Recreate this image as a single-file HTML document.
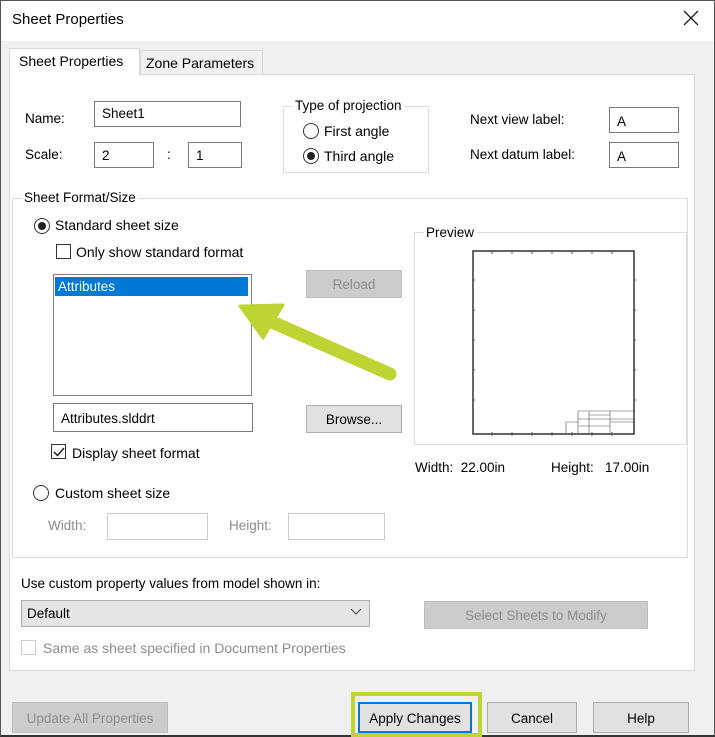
<!DOCTYPE html>
<html><head><style>
*{box-sizing:border-box;margin:0;padding:0}
body{width:715px;height:737px;background:#f0f0f0;font-family:"Liberation Sans",sans-serif;font-size:13.5px;color:#000;position:relative;overflow:hidden}
.a{position:absolute;white-space:nowrap}
.win{position:absolute;left:0;top:0;width:715px;height:737px;border:1px solid #555;border-bottom:2px solid #333}
.tb{position:absolute;left:1px;top:1px;width:713px;height:40px;background:#fff}
.inp{position:absolute;background:#fff;border:1px solid #7a7a7a;padding:5px 7px}
.gb{position:absolute;border:1px solid #dcdcdc}
.btn{position:absolute;background:#e1e1e1;border:1px solid #adadad;text-align:center}
.dis{color:#8d8d8d;background:#cccccc;border-color:#bfbfbf}
.rad{position:absolute;width:16px;height:16px;border:1px solid #333;border-radius:50%;background:#fff}
.rad.on::after{content:"";position:absolute;left:3px;top:3px;width:8px;height:8px;border-radius:50%;background:#222}
.chk{position:absolute;width:15px;height:15px;border:1px solid #333;background:#fff}
</style></head><body>
<div class="win"></div>
<div class="tb"></div>
<div class="a" style="left:12px;top:11px;font-size:15px">Sheet Properties</div>
<svg class="a" style="left:683px;top:10px" width="16" height="16"><path d="M1 1L15 15M15 1L1 15" stroke="#222" stroke-width="1.4"/></svg>

<div class="a" style="left:140px;top:50px;width:123px;height:25px;background:#f0f0f0;border:1px solid #d9d9d9;border-bottom:none"></div>
<div class="a" style="left:146px;top:55px;font-size:14px">Zone Parameters</div>
<div class="a" style="left:9px;top:74px;width:686px;height:597px;background:#fff;border:1px solid #d9d9d9"></div>
<div class="a" style="left:9px;top:48px;width:131px;height:28px;background:#fff;border:1px solid #d9d9d9;border-bottom:none"></div>
<div class="a" style="left:19px;top:53px;font-size:14px">Sheet Properties</div>

<div class="a" style="left:25px;top:111px">Name:</div>
<div class="inp" style="left:94px;top:101px;width:147px;height:26px;padding-top:4px">Sheet1</div>
<div class="a" style="left:25px;top:147px">Scale:</div>
<div class="inp" style="left:94px;top:142px;width:60px;height:26px">2</div>
<div class="a" style="left:167px;top:147px">:</div>
<div class="inp" style="left:188px;top:142px;width:54px;height:26px">1</div>

<div class="gb" style="left:283px;top:106px;width:146px;height:67px"></div>
<div class="a" style="left:293px;top:98px;background:#fff;padding:0 2px">Type of projection</div>
<div class="rad" style="left:303px;top:123px"></div><div class="a" style="left:324px;top:123px;font-size:14px">First angle</div>
<div class="rad on" style="left:303px;top:148px"></div><div class="a" style="left:324px;top:148px;font-size:14px">Third angle</div>

<div class="a" style="left:470px;top:112px">Next view label:</div>
<div class="inp" style="left:609px;top:107px;width:70px;height:26px;padding-top:6px">A</div>
<div class="a" style="left:470px;top:147px">Next datum label:</div>
<div class="inp" style="left:609px;top:142px;width:70px;height:26px;padding-top:6px">A</div>

<div class="gb" style="left:12px;top:198px;width:676px;height:360px"></div>
<div class="a" style="left:22px;top:190px;background:#fff;padding:0 2px">Sheet Format/Size</div>
<div class="rad on" style="left:34px;top:218px"></div><div class="a" style="left:55px;top:217px;font-size:14px">Standard sheet size</div>
<div class="chk" style="left:56px;top:244px"></div><div class="a" style="left:76px;top:244px;font-size:14px">Only show standard format</div>
<div class="a" style="left:53px;top:274px;width:199px;height:122px;border:1px solid #828282;background:#fff"></div>
<div class="a" style="left:55px;top:277px;width:193px;height:19px;background:#0078d7;color:#fff;padding:2px 3px">Attributes</div>
<div class="inp" style="left:53px;top:403px;width:200px;height:29px;padding-top:7px">Attributes.slddrt</div>
<div class="chk" style="left:51px;top:444px"></div>
<svg class="a" style="left:52px;top:445px" width="14" height="14"><path d="M2 7L5.5 10.5L12 3" stroke="#222" stroke-width="1.5" fill="none"/></svg>
<div class="a" style="left:72px;top:445px;font-size:14px">Display sheet format</div>
<div class="btn dis" style="left:306px;top:270px;width:96px;height:28px;padding-top:6px">Reload</div>
<div class="btn" style="left:306px;top:405px;width:96px;height:28px;padding-top:6px">Browse...</div>

<div class="gb" style="left:414px;top:232px;width:273px;height:213px"></div>
<div class="a" style="left:424px;top:225px;background:#fff;padding:0 2px">Preview</div>
<svg class="a" style="left:472px;top:250px" width="164" height="186">
<rect x="1" y="1" width="161" height="183" fill="#fff" stroke="#333" stroke-width="1.5"/>
<g stroke="#555" stroke-width="1" fill="none">
<path d="M20 0v4M40 0v4M60 0v4M80 0v4M100 0v4M120 0v4M140 0v4M20 182v4M40 182v4M60 182v4M80 182v4M100 182v4M120 182v4M140 182v4M0 30h3M0 60h3M0 90h3M0 120h3M0 150h3M161 30h3M161 60h3M161 90h3M161 120h3M161 150h3"/>
<path d="M106 184v-23h56M106 169h56M94 184v-12h12M117 161v23M138 161v23M138 172h24M106 176h32M117 165h21" stroke-width="0.6"/>
</g></svg>
<div class="a" style="left:415px;top:460px">Width:&nbsp; 22.00in</div>
<div class="a" style="left:551px;top:460px">Height:&nbsp;&nbsp; 17.00in</div>

<div class="rad" style="left:33px;top:485px"></div><div class="a" style="left:55px;top:485px;font-size:14px">Custom sheet size</div>
<div class="a" style="left:48px;top:518px;color:#8d8d8d">Width:</div>
<div class="a" style="left:107px;top:513px;width:101px;height:27px;border:1px solid #ccc"></div>
<div class="a" style="left:229px;top:518px;color:#8d8d8d">Height:</div>
<div class="a" style="left:288px;top:513px;width:97px;height:27px;border:1px solid #ccc"></div>

<div class="a" style="left:21px;top:576px">Use custom property values from model shown in:</div>
<div class="a" style="left:21px;top:600px;width:349px;height:27px;background:#e5e5e5;border:1px solid #adadad;padding:5px 5px">Default</div>
<svg class="a" style="left:350px;top:608px" width="12" height="8"><path d="M1 1L6 6L11 1" stroke="#444" fill="none"/></svg>
<div class="btn dis" style="left:424px;top:601px;width:224px;height:28px;padding-top:6px">Select Sheets to Modify</div>
<div class="chk" style="left:21px;top:640px;border-color:#ccc"></div>
<div class="a" style="left:43px;top:640px;color:#8d8d8d;font-size:14px">Same as sheet specified in Document Properties</div>

<div class="btn dis" style="left:12px;top:702px;width:156px;height:31px;padding-top:8px">Update All Properties</div>
<div class="a" style="left:351px;top:692px;width:131px;height:45px;border:4px solid #bdd432"></div>
<div class="btn" style="left:358px;top:702px;width:114px;height:31px;padding-top:7px;border:2px solid #0078d7">Apply Changes</div>
<div class="btn" style="left:487px;top:702px;width:90px;height:31px;padding-top:8px">Cancel</div>
<div class="btn" style="left:593px;top:702px;width:96px;height:31px;padding-top:8px">Help</div>

<svg class="a" style="left:0;top:0" width="715" height="737">
<path d="M390 374L272 322" stroke="#bdd432" stroke-width="13" stroke-linecap="round"/>
<polygon points="240,306 283,305 263,338" fill="#bdd432" stroke="#bdd432" stroke-width="3" stroke-linejoin="round"/>
</svg>
</body></html>
